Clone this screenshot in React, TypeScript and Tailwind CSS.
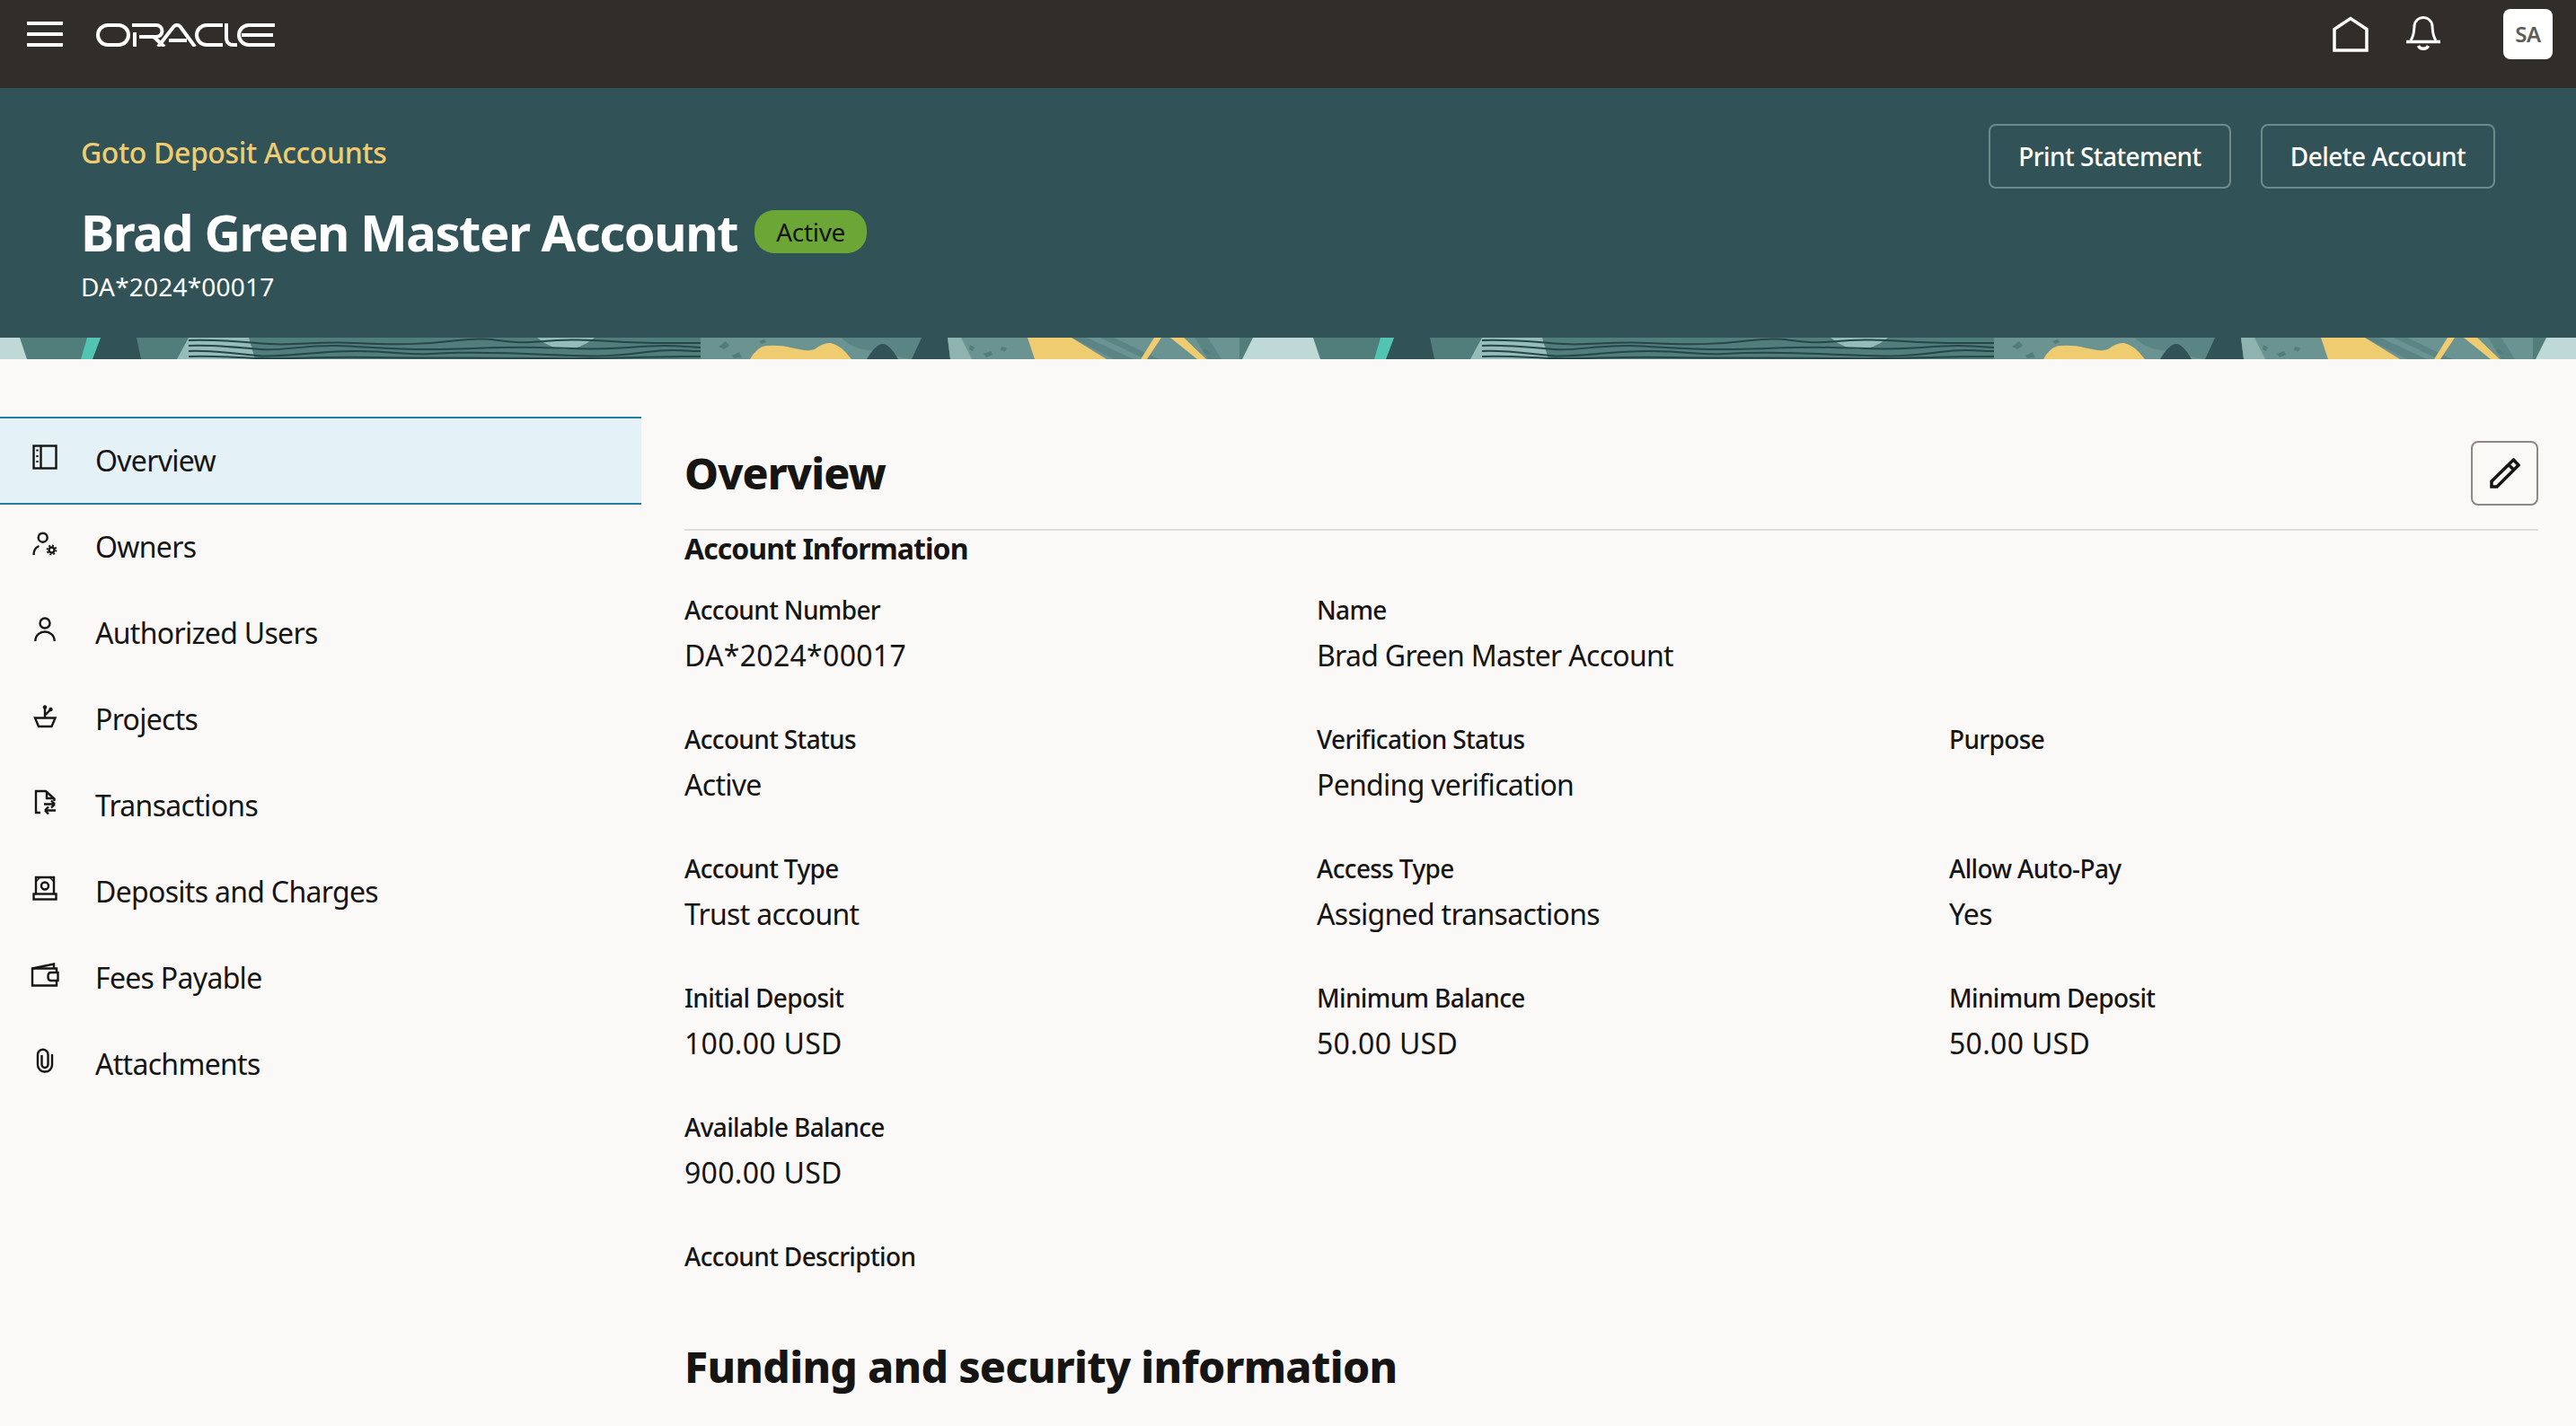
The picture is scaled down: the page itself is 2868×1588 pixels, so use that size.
import { ReactElement } from "react";

const Strip = (): ReactElement => (
    <svg width="1440" height="24" viewBox="0 0 1440 24" className="shrink-0">
        <rect width="1440" height="24" fill="#517d7b" />
        <polygon points="0,0 22,0 30,24 0,24" fill="#bfd9d9" />
        <polygon points="112,0 152,0 157,24 103,24" fill="#315357" />
        <polygon points="97,0 112,0 103,24 90,24" fill="#52c5b2" />
        <polygon points="210,0 277,0 284,24 197,24" fill="#95bcb8" />
        <path d="M598 0Q630 26 662 0Z" fill="#95bcb8" />
        <rect x="780" width="600" height="24" fill="#6a9391" />
        <path d="M937 0Q950 14 975 15Q1000 22 1015 24L1026 0Z" fill="#5a8584" />
        <polygon points="1026,0 1055,0 1058,24 1015,24" fill="#315357" />
        <path d="M965 24Q975 7 983 7Q990 7 1000 24Z" fill="#315357" />
        <polygon points="1055,0 1070,0 1082,24 1058,24" fill="#8fb3b0" />
        <path d="M835 24Q843 10 853 9Q870 8 880 11Q900 16 907 13Q917 5 925 6Q936 8 948 24Z" fill="#f0cc71" />
        <path d="M1193 0L1210 0L1262 24L1240 24ZM1225 0L1240 0L1290 24L1275 24ZM1330 0L1345 0L1360 24L1345 24Z" fill="#5a8584" />
        <polygon points="1144,0 1193,0 1232,24 1152,24" fill="#f0cc71" />
        <polygon points="1285,0 1293,0 1277,24 1270,24" fill="#f0cc71" />
        <polygon points="1303,0 1318,0 1343,24 1333,24" fill="#f0cc71" />
        <polygon points="1395,0 1440,0 1440,24 1383,24" fill="#bfd9d9" />
        <path d="M800 10l8-6 4 5-6 4ZM815 20l8-4 3 6-9 1ZM845 4l6-2 2 3-5 2ZM1080 8l5 3-2 4-4-2ZM1095 18l8-3 2 4-7 3ZM1115 10l6 2-2 3-5-1ZM1340 12l8 4-2 3-7-3Z" fill="#517d7b" />
        <g fill="none" stroke="#264649" strokeWidth="2">
            <path d="M210 3C250 2 270 5 300 7S350 4 395 6S470 8 510 3S560 7 590 5S640 1 680 4S740 6 780 6" />
            <path d="M210 9C240 8 265 11 290 13S340 8 375 9S440 14 490 13S555 10 600 11S660 14 700 11S750 9 780 11" />
            <path d="M210 15C235 14 255 17 285 20S345 15 395 15S450 20 480 18S550 16 610 19S690 20 720 16S760 15 780 15" />
            <path d="M210 21C240 20 260 22 290 23S350 21 420 22S520 22 600 23S700 21 780 21" />
        </g>
    </svg>
);

const MenuIcon = (): ReactElement => (
    <svg width="40" height="28" viewBox="0 0 40 28" fill="#fff" className="mt-[24px] shrink-0">
        <rect width="40" height="4" />
        <rect y="12" width="40" height="4" />
        <rect y="24" width="40" height="4" />
    </svg>
);

// logo is drawn with strokes, not a font
const OracleLogo = (): ReactElement => (
    <svg width="199" height="26" viewBox="0 0 199 26" fill="none" stroke="#fff" strokeWidth="4" className="ml-[37px] mt-[26px] shrink-0">
        <rect x="2" y="2" width="34" height="22" rx="11" />
        <path d="M40 2H67a6.500 6.500 0 0 1 0 13H48M43 10V26M64 15L76 26" />
        <path d="M69 26L86 4Q90 0 94 4L110 26M81 19H101" />
        <path d="M141 2H123a11 11 0 0 0 0 22H141" />
        <path d="M145 0V16q0 8 8 8H157" />
        <path d="M199 2H170a11 11 0 0 0 0 22H199M162 13H197" />
    </svg>
);

const HomeIcon = (): ReactElement => (
    <svg width="40" height="40" viewBox="0 0 40 40" fill="none" stroke="#fff" strokeWidth="3.500">
        <path d="M2 38V14.500L20 2.500L38 14.500V38Z" />
    </svg>
);

const BellIcon = (): ReactElement => (
    <svg width="38" height="40" viewBox="0 0 38 40" fill="none" stroke="#fff" strokeWidth="3">
        <path d="M5 27C9 21 8.500 16 9 11C9.500 5 14 1.500 19 1.500C24 1.500 28.500 5 29 11C29.500 16 29 21 33 27" />
        <path d="M0 28.500H38" strokeWidth="3.500" />
        <path d="M13.500 33A6 5.500 0 0 0 24.500 33" strokeWidth="3.500" />
    </svg>
);

const PencilIcon = (): ReactElement => (
    <svg width="34" height="34" viewBox="0 0 34 34" fill="none" stroke="#161513" strokeWidth="3.500">
        <path d="M2 26L26.500 2L32 8L8 32H2Z" />
        <path d="M21 7.500L27 13.500" />
    </svg>
);

const navItems: { label: string; icon: ReactElement }[] = [
    {
        label: "Overview",
        icon: (
            <>
                <rect x="3.500" y="3.500" width="25" height="25" />
                <path d="M11.500 3.500V28.500" />
                <path d="M7.500 7.500V9.500M7.500 14V16M7.500 20V22" />
            </>
        ),
    },
    {
        label: "Owners",
        icon: (
            <>
                <circle cx="13.700" cy="9.700" r="5" />
                <path d="M3.500 29C3.500 24 5.500 20.500 9.500 19" />
                <circle cx="23.500" cy="23.500" r="3" strokeWidth="2.400" />
                <circle cx="23.500" cy="23.500" r="5" strokeWidth="1.800" strokeDasharray="2 1.900" />
            </>
        ),
    },
    {
        label: "Authorized Users",
        icon: (
            <>
                <circle cx="16" cy="9" r="5.500" />
                <path d="M5.300 29C5.300 22 11 18.500 16 18.500S26.700 22 26.700 29" />
            </>
        ),
    },
    {
        label: "Projects",
        icon: (
            <>
                <path d="M5 18.500H27.500L23.500 28H9Z" />
                <path d="M16 6V18M16 15.500L22 9.500" />
                <circle cx="16" cy="6.500" r="2.200" fill="#161513" stroke="none" />
                <circle cx="22.500" cy="9" r="2.200" fill="#161513" stroke="none" />
            </>
        ),
    },
    {
        label: "Transactions",
        icon: (
            <>
                <path d="M11 28H6V4H17L26.500 12.500V15" />
                <path d="M18 4V12H26" />
                <path d="M15 18.500H27M23 14.500L27 18.500M28 25.500H16M20 21.500L16 25.500M20 29.500L16 25.500M23 22.500L27 18.500" />
            </>
        ),
    },
    {
        label: "Deposits and Charges",
        icon: (
            <>
                <path d="M6 22V4H26V22" />
                <rect x="3.500" y="22.500" width="25" height="6" />
                <circle cx="16" cy="13.500" r="4" />
                <path d="M6 9L10.500 4M26 9L21.500 4" strokeWidth="1.500" />
            </>
        ),
    },
    {
        label: "Fees Payable",
        icon: (
            <>
                <path d="M29 14V9.500H2V28.500H29V23" />
                <path d="M2 9.500L26 4.500V9.500" />
                <path d="M30.500 14H22.500Q19.500 14 19.500 18.500Q19.500 23 22.500 23H30.500Z" />
            </>
        ),
    },
    {
        label: "Attachments",
        icon: <path d="M24 9V21A8 7.500 0 0 1 8 21V9.500A5.500 5.500 0 0 1 19.500 9.500V20.500A3.500 3.500 0 0 1 12.500 20.500V10" />,
    },
];

const NavRow = ({ label, icon, selected }: { label: string; icon: ReactElement; selected: boolean }): ReactElement => (
    <div
        className={
            selected
                ? "-mb-[1px] flex h-[98px] items-center border-y-2 border-[#227e9e] bg-[#e4f1f7] pl-[34px]"
                : "flex h-[96px] items-center pl-[34px]"
        }
    >
        <svg width="32" height="32" viewBox="0 0 32 32" fill="none" stroke="#161513" strokeWidth="2.400" className="mb-[8px] shrink-0">
            {icon}
        </svg>
        <span className="ml-[40px] text-[32px] leading-[44px] tracking-[-0.7px] text-[#161513]">{label}</span>
    </div>
);

const Field = ({ label, value, wide }: { label: string; value?: string; wide?: boolean }): ReactElement => (
    <div>
        <div className="text-[28px] leading-[40px] font-medium tracking-[-0.65px] text-[#161513]">{label}</div>
        {value && (
            <div className={`mt-[9px] text-[32px] leading-[44px] text-[#161513] ${wide ? "tracking-[0.3px]" : "tracking-[-0.7px]"}`}>{value}</div>
        )}
    </div>
);

const Button = ({ label, width }: { label: string; width: string }): ReactElement => (
    <button className={`flex h-[72px] items-center justify-center rounded-[8px] border-2 border-[#6f8a8c] text-[28px] font-medium tracking-[-0.55px] text-white ${width}`}>
        {label}
    </button>
);

export default function App(): ReactElement {
    return (
        <div className="h-[1588px] w-[2868px] overflow-hidden bg-[#fbf9f8] font-['Noto_Sans','Open_Sans',sans-serif]">
            <header className="flex h-[98px] items-start bg-[#312d2a] pl-[30px] pr-[26px]">
                <MenuIcon />
                <OracleLogo />
                <div className="ml-auto flex items-center pt-[10px]">
                    <HomeIcon />
                    <div className="ml-[42px]">
                        <BellIcon />
                    </div>
                    <div className="ml-[70px] flex h-[56px] w-[55px] items-center justify-center rounded-[8px] bg-white text-[24px] font-semibold tracking-[-0.3px] text-[#5f5b57]">
                        SA
                    </div>
                </div>
            </header>
            <div className="flex h-[278px] justify-between bg-[#315357] pl-[90px] pr-[90px] pt-[40px]">
                <div>
                    <div className="mt-[10px] text-[32px] leading-[44px] font-medium tracking-[-0.4px] text-[#f0cc71]">Goto Deposit Accounts</div>
                    <div className="mt-[32px] flex items-center">
                        <h1 className="text-[56px] leading-[68px] font-bold tracking-[-1.45px] text-white">Brad Green Master Account</h1>
                        <span className="ml-[19px] flex h-[48px] w-[125px] items-center justify-center rounded-[22px] bg-[#6ba636] text-[28px] tracking-[-0.3px] text-[#161513]">
                            Active
                        </span>
                    </div>
                    <div className="mt-[7px] text-[28px] leading-[40px] tracking-[0.2px] text-white">DA*2024*00017</div>
                </div>
                <div className="flex gap-[33px]">
                    <Button label="Print Statement" width="w-[270px]" />
                    <Button label="Delete Account" width="w-[261px]" />
                </div>
            </div>
            <div className="flex h-[24px] overflow-hidden">
                <Strip />
                <Strip />
            </div>
            <div className="flex">
                <nav className="w-[714px] shrink-0 pt-[64px]">
                    {navItems.map((n, i) => (
                        <NavRow key={n.label} label={n.label} icon={n.icon} selected={i === 0} />
                    ))}
                </nav>
                <main className="flex-1 pl-[48px] pr-[42px] pt-[91px]">
                    <div className="flex items-center justify-between border-b-2 border-[#e0dedb] pb-[26px]">
                        <h2 className="text-[48px] leading-[60px] font-extrabold tracking-[-0.9px] text-[#161513]">Overview</h2>
                        <button className="flex h-[72px] w-[75px] items-center justify-center rounded-[8px] border-2 border-[#8c8985]">
                            <PencilIcon />
                        </button>
                    </div>
                    <h3 className="text-[32px] leading-[40px] font-bold tracking-[-0.95px] text-[#161513]">Account Information</h3>
                    <div className="mt-[28px] grid grid-cols-[704px_704px_1fr] auto-rows-[144px]">
                        <Field label="Account Number" value="DA*2024*00017" wide />
                        <Field label="Name" value="Brad Green Master Account" />
                        <div />
                        <Field label="Account Status" value="Active" />
                        <Field label="Verification Status" value="Pending verification" />
                        <Field label="Purpose" />
                        <Field label="Account Type" value="Trust account" />
                        <Field label="Access Type" value="Assigned transactions" />
                        <Field label="Allow Auto-Pay" value="Yes" />
                        <Field label="Initial Deposit" value="100.00 USD" wide />
                        <Field label="Minimum Balance" value="50.00 USD" wide />
                        <Field label="Minimum Deposit" value="50.00 USD" wide />
                        <Field label="Available Balance" value="900.00 USD" wide />
                    </div>
                    <Field label="Account Description" />
                    <h2 className="mt-[73px] text-[48px] leading-[60px] font-extrabold tracking-[-0.7px] text-[#161513]">Funding and security information</h2>
                </main>
            </div>
        </div>
    );
}
